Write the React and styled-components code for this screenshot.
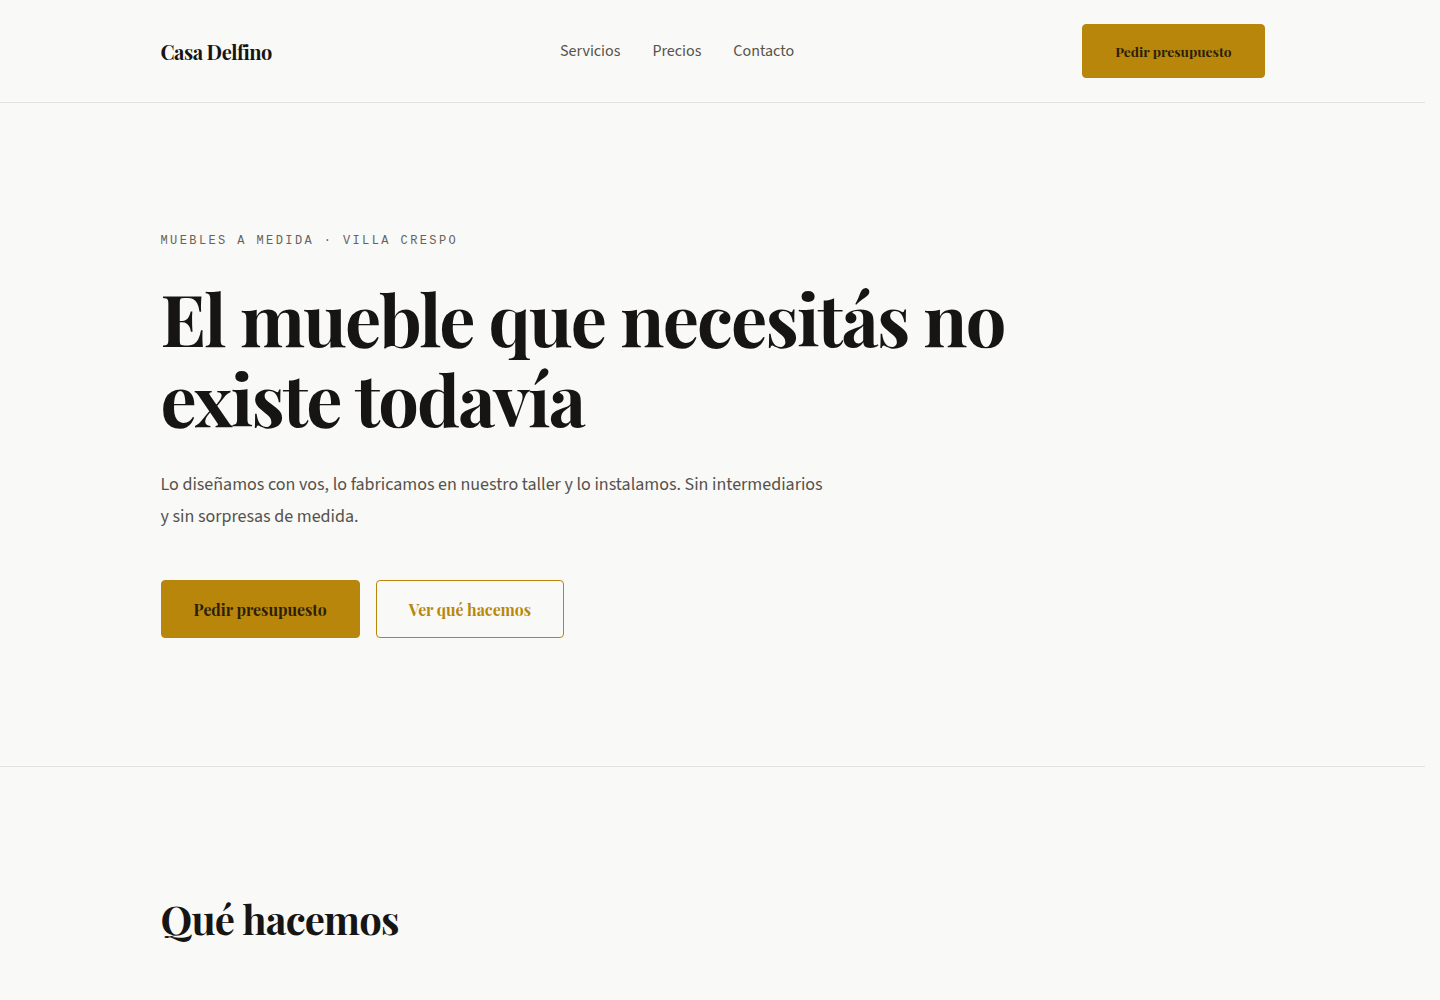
import styled, { createGlobalStyle } from 'styled-components';

const colors = {
  bg: '#f9f9f7',
  ink: '#161513',
  muted: '#55524c',
  line: '#e4e2dd',
  gold: '#b8860b',
  goldInk: '#2b2006',
};

const serif = `"Playfair Display", "Liberation Serif", "DejaVu Serif", serif`;
const sans = `"Source Sans 3", Lato, "Noto Sans", sans-serif`;
const mono = `"Liberation Mono", "DejaVu Sans Mono", monospace`;

const GlobalStyle = createGlobalStyle`
  * { box-sizing: border-box; }
  html { overflow-y: scroll; background: ${colors.bg}; }
  html, body { margin: 0; padding: 0; }
  body {
    background: ${colors.bg};
    color: ${colors.ink};
    font-family: ${sans};
    -webkit-font-smoothing: antialiased;
  }
  #root { margin-right: 15px; }
  a { color: inherit; text-decoration: none; }
`;

const Container = styled.div`
  max-width: 1200px;
  margin: 0 auto;
  padding: 0 48px;
`;

const Header = styled.header`
  border-bottom: 1px solid ${colors.line};
`;

const HeaderInner = styled(Container)`
  height: 102px;
  display: flex;
  align-items: center;
  justify-content: space-between;
`;

const Logo = styled.a`
  font-family: ${serif};
  font-weight: 700;
  font-size: 20px;
  letter-spacing: -0.5px;
  color: ${colors.ink};
`;

const Nav = styled.nav`
  display: flex;
  gap: 32px;
`;

const NavLink = styled.a`
  font-size: 16px;
  color: ${colors.muted};
`;

const Button = styled.a`
  display: inline-flex;
  align-items: center;
  justify-content: center;
  height: ${p => (p.$small ? '54px' : '58px')};
  padding: 0 ${p => (p.$small ? '32px' : '32px')};
  border-radius: 4px;
  font-family: ${serif};
  font-weight: 700;
  font-size: ${p => (p.$small ? '13.8px' : '15.8px')};
  border: 1px solid ${colors.gold};
  background: ${p => (p.$outline ? 'transparent' : colors.gold)};
  color: ${p => (p.$outline ? colors.gold : colors.goldInk)};
`;

const Hero = styled.section`
  padding: 131px 0 128px;
  border-bottom: 1px solid ${colors.line};
`;

const Eyebrow = styled.p`
  margin: 0 0 29px;
  font-family: ${mono};
  font-size: 12px;
  line-height: 14px;
  letter-spacing: 2.4px;
  text-transform: uppercase;
  color: #66635e;
`;

const Headline = styled.h1`
  margin: 0 0 32px;
  font-family: ${serif};
  font-weight: 700;
  font-size: 72px;
  line-height: 80px;
  letter-spacing: -1.8px;
  color: ${colors.ink};
`;

const Lead = styled.p`
  margin: 0 0 ${p => (p.$tight ? '47px' : '48px')};
  max-width: 668px;
  font-size: 18px;
  line-height: 32px;
  color: ${colors.muted};
`;

const Actions = styled.div`
  display: flex;
  gap: 16px;
`;

const Section = styled.section`
  padding: 128px 0;
  border-bottom: ${p => (p.$last ? 'none' : `1px solid ${colors.line}`)};
`;

const SectionTitle = styled.h2`
  margin: 0 0 72px;
  font-family: ${serif};
  font-weight: 700;
  font-size: 40px;
  line-height: 48px;
  letter-spacing: -0.8px;
`;

const Grid = styled.div`
  display: grid;
  grid-template-columns: repeat(3, 1fr);
  gap: 32px;
`;

const Card = styled.div`
  border: 1px solid ${colors.line};
  border-radius: 4px;
  padding: 32px;
  background: #fff;
`;

const CardTitle = styled.h3`
  margin: 0 0 12px;
  font-family: ${serif};
  font-size: 24px;
`;

const CardText = styled.p`
  margin: 0;
  font-size: 16px;
  line-height: 28px;
  color: ${colors.muted};
`;

const Price = styled.p`
  margin: 16px 0 0;
  font-family: ${serif};
  font-weight: 700;
  font-size: 28px;
  color: ${colors.gold};
`;

const Footer = styled.footer`
  border-top: 1px solid ${colors.line};
  padding: 40px 0;
  font-size: 14px;
  color: ${colors.muted};
`;

const services = [
  { title: 'Cocinas', text: 'Bajo mesadas, alacenas y despensas pensadas para tu espacio y tu forma de cocinar.' },
  { title: 'Placares', text: 'Vestidores y placares con interiores a medida, puertas corredizas o batientes.' },
  { title: 'Living', text: 'Bibliotecas, racks y estanterías que aprovechan cada centímetro de la pared.' },
];

const prices = [
  { title: 'Diseño', text: 'Visita, medición y proyecto en 3D.', price: 'Sin cargo' },
  { title: 'Fabricación', text: 'En nuestro taller de Villa Crespo.', price: 'A cotizar' },
  { title: 'Instalación', text: 'Colocación y ajustes finales.', price: 'Incluida' },
];

export default function App() {
  return (
    <>
      <GlobalStyle />
      <Header>
        <HeaderInner>
          <Logo href="#">Casa Delfino</Logo>
          <Nav>
            <NavLink href="#servicios">Servicios</NavLink>
            <NavLink href="#precios">Precios</NavLink>
            <NavLink href="#contacto">Contacto</NavLink>
          </Nav>
          <Button $small href="#contacto">Pedir presupuesto</Button>
        </HeaderInner>
      </Header>

      <Hero>
        <Container>
          <Eyebrow>Muebles a medida · Villa Crespo</Eyebrow>
          <Headline>
            El mueble que necesitás no
            <br />
            existe todavía
          </Headline>
          <Lead $tight>
            Lo diseñamos con vos, lo fabricamos en nuestro taller y lo instalamos. Sin intermediarios
            y sin sorpresas de medida.
          </Lead>
          <Actions>
            <Button href="#contacto">Pedir presupuesto</Button>
            <Button $outline href="#servicios">Ver qué hacemos</Button>
          </Actions>
        </Container>
      </Hero>

      <Section id="servicios">
        <Container>
          <SectionTitle>Qué hacemos</SectionTitle>
          <Grid>
            {services.map(s => (
              <Card key={s.title}>
                <CardTitle>{s.title}</CardTitle>
                <CardText>{s.text}</CardText>
              </Card>
            ))}
          </Grid>
        </Container>
      </Section>

      <Section id="precios">
        <Container>
          <SectionTitle>Precios</SectionTitle>
          <Grid>
            {prices.map(p => (
              <Card key={p.title}>
                <CardTitle>{p.title}</CardTitle>
                <CardText>{p.text}</CardText>
                <Price>{p.price}</Price>
              </Card>
            ))}
          </Grid>
        </Container>
      </Section>

      <Section id="contacto" $last>
        <Container>
          <SectionTitle>Contacto</SectionTitle>
          <Lead>Escribinos contando qué necesitás y te respondemos en menos de 48 horas.</Lead>
          <Actions>
            <Button href="#">Pedir presupuesto</Button>
          </Actions>
        </Container>
      </Section>

      <Footer>
        <Container>© Casa Delfino · Villa Crespo, Buenos Aires</Container>
      </Footer>
    </>
  );
}
